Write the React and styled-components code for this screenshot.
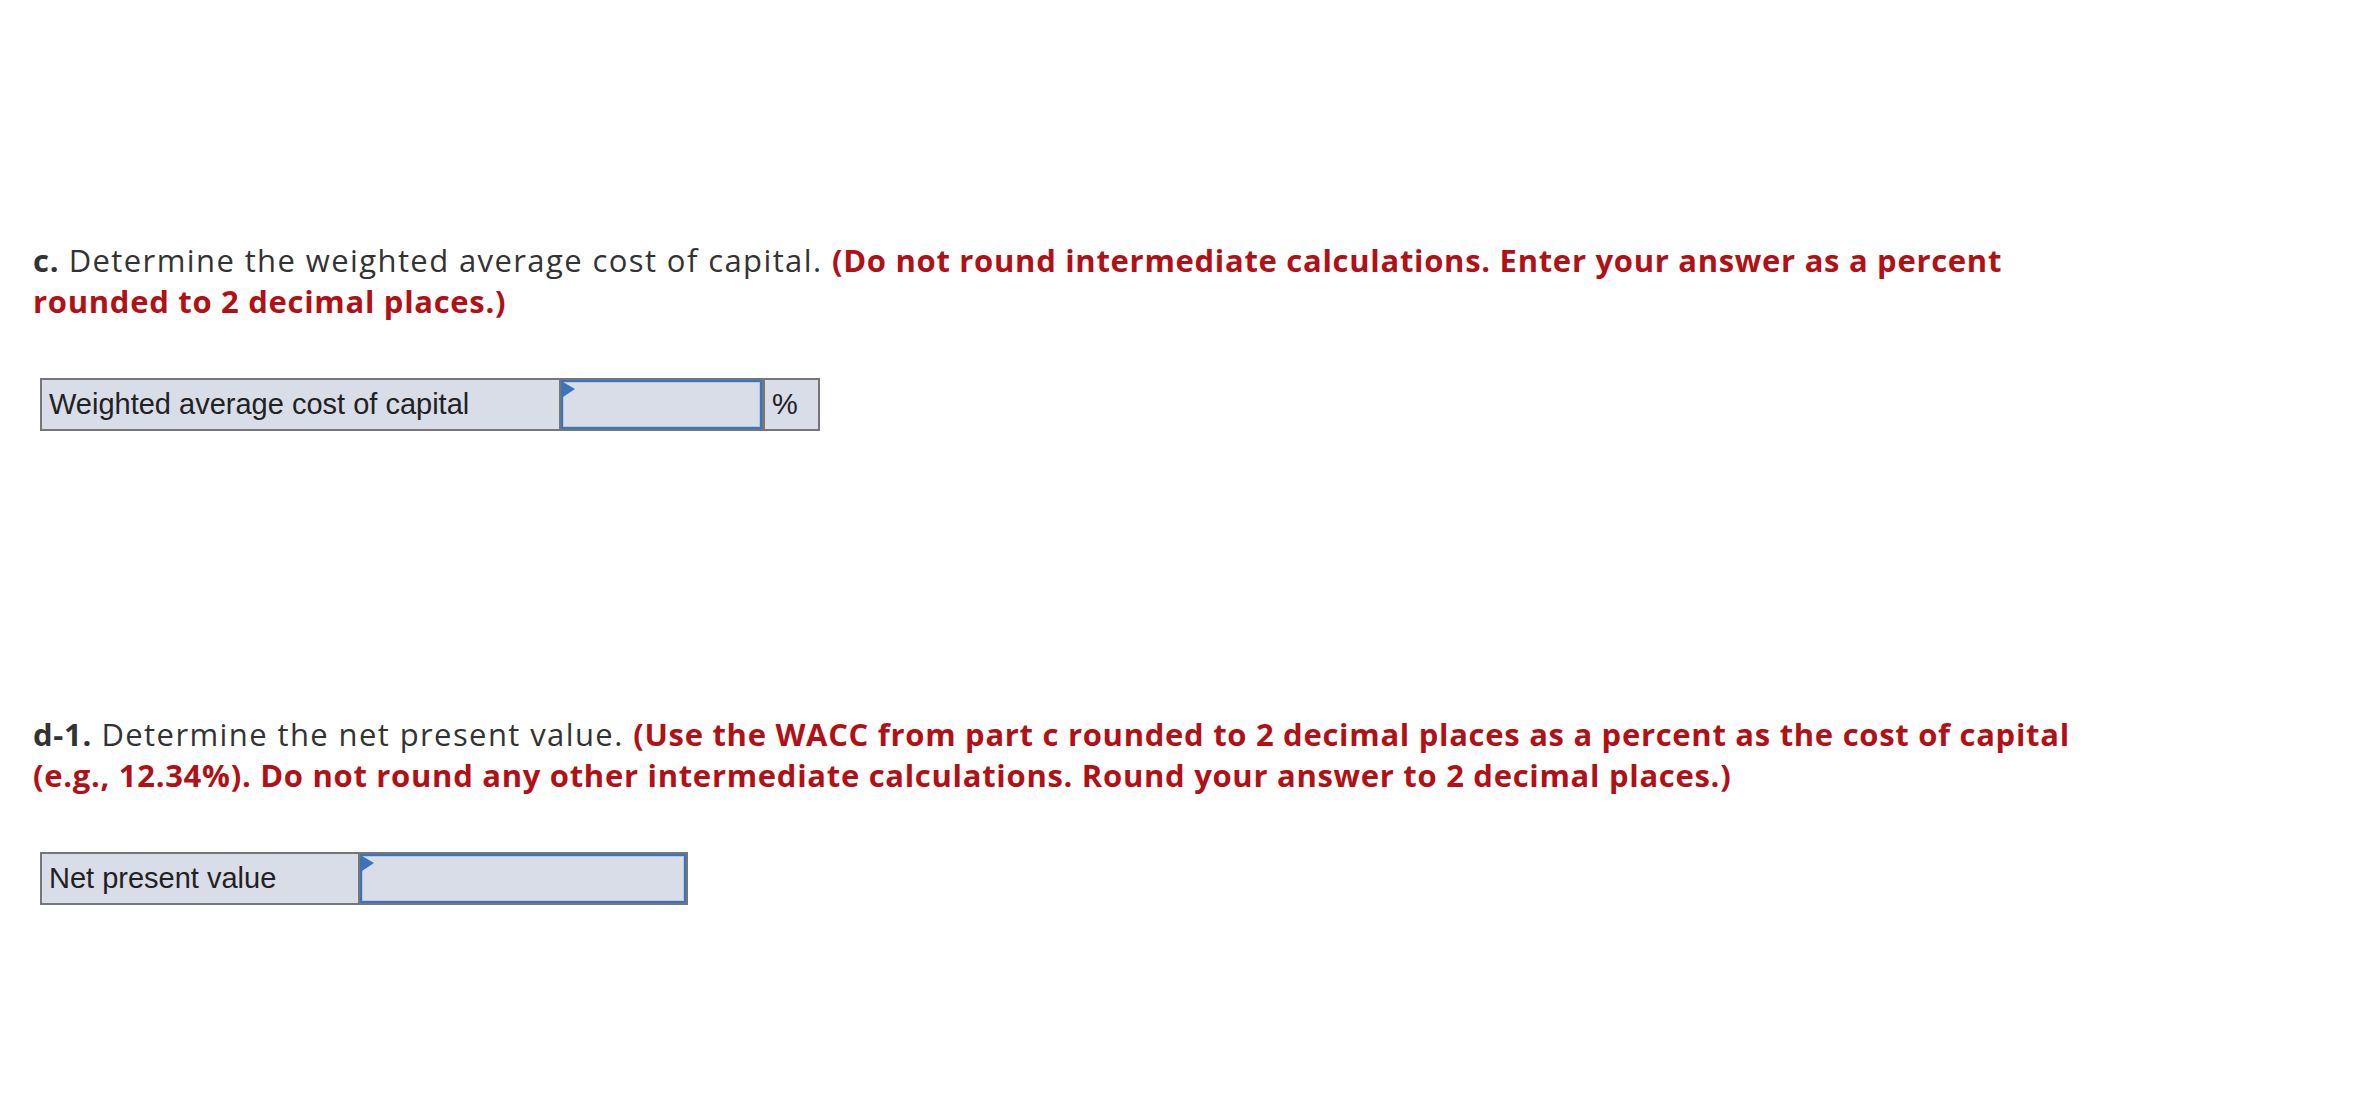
import styled, { createGlobalStyle } from "styled-components";

const GlobalStyle = createGlobalStyle`
  body {
    margin: 0;
    background: #ffffff;
  }
`;

const Page = styled.main`
  padding: 240px 0 0 33px;
  min-height: 1102px;
  box-sizing: border-box;
`;

const Part = styled.section`
  margin-bottom: ${(props) => props.$gap || 0}px;
`;

const Prompt = styled.p`
  margin: 0 0 56px;
  max-width: 2080px;
  font-family: "Open Sans", Lato, sans-serif;
  font-size: 31px;
  line-height: 41px;
  letter-spacing: 1.4px;
  color: #333333;
`;

const PartLabel = styled.strong`
  font-weight: 700;
  letter-spacing: 0.7px;
  color: #333333;
`;

const Instruction = styled.strong`
  font-weight: 700;
  letter-spacing: 0.7px;
  color: #b11116;
`;

const AnswerRow = styled.div`
  display: inline-flex;
  margin-left: 7px;
  border: 2px solid #767676;
  background: #d9dde8;
  height: 49px;
`;

const Cell = styled.div`
  display: flex;
  align-items: center;
  width: ${(props) => props.$width}px;
  padding: 0 7px;
  box-sizing: border-box;
  font-family: "Liberation Sans", Arial, sans-serif;
  font-size: 29px;
  color: #222222;
`;

const UnitCell = styled(Cell)`
  border-left: 3px solid #767676;
  box-sizing: content-box;
  padding: 0 0 0 7px;
  width: ${(props) => props.$width - 7}px;
`;

const InputCell = styled.div`
  position: relative;
  width: ${(props) => props.$width}px;
  border-left: 2px solid #767676;
`;

const Field = styled.input`
  display: block;
  width: 100%;
  height: 100%;
  box-sizing: border-box;
  margin: 0;
  border: 2px solid #3b74bb;
  box-shadow: inset 0 0 0 1px #b4c8e4;
  background: #d9dde8;
  font-family: "Liberation Sans", Arial, sans-serif;
  font-size: 26px;
  outline: none;
`;

const Flag = styled.span`
  position: absolute;
  top: 2px;
  left: 2px;
  width: 0;
  height: 0;
  border-top: 7px solid transparent;
  border-bottom: 8px solid transparent;
  border-left: 12px solid #3b74bb;
  pointer-events: none;
`;

export default function App() {
  return (
    <>
      <GlobalStyle />
      <Page>
        <Part $gap={283}>
          <Prompt>
            <PartLabel>c.</PartLabel> Determine the weighted average cost of
            capital.{" "}
            <Instruction>
              (Do not round intermediate calculations. Enter your answer as a
              percent rounded to 2 decimal places.)
            </Instruction>
          </Prompt>
          <AnswerRow>
            <Cell $width={517}>Weighted average cost of capital</Cell>
            <InputCell $width={201}>
              <Field type="text" aria-label="Weighted average cost of capital" />
              <Flag />
            </InputCell>
            <UnitCell $width={53}>%</UnitCell>
          </AnswerRow>
        </Part>
        <Part>
          <Prompt>
            <PartLabel>d-1.</PartLabel> Determine the net present value.{" "}
            <Instruction>
              (Use the WACC from part c rounded to 2 decimal places as a
              percent as the cost of capital (e.g., 12.34%). Do not round any
              other intermediate calculations. Round your answer to 2 decimal
              places.)
            </Instruction>
          </Prompt>
          <AnswerRow>
            <Cell $width={316}>Net present value</Cell>
            <InputCell $width={326}>
              <Field type="text" aria-label="Net present value" />
              <Flag />
            </InputCell>
          </AnswerRow>
        </Part>
      </Page>
    </>
  );
}
